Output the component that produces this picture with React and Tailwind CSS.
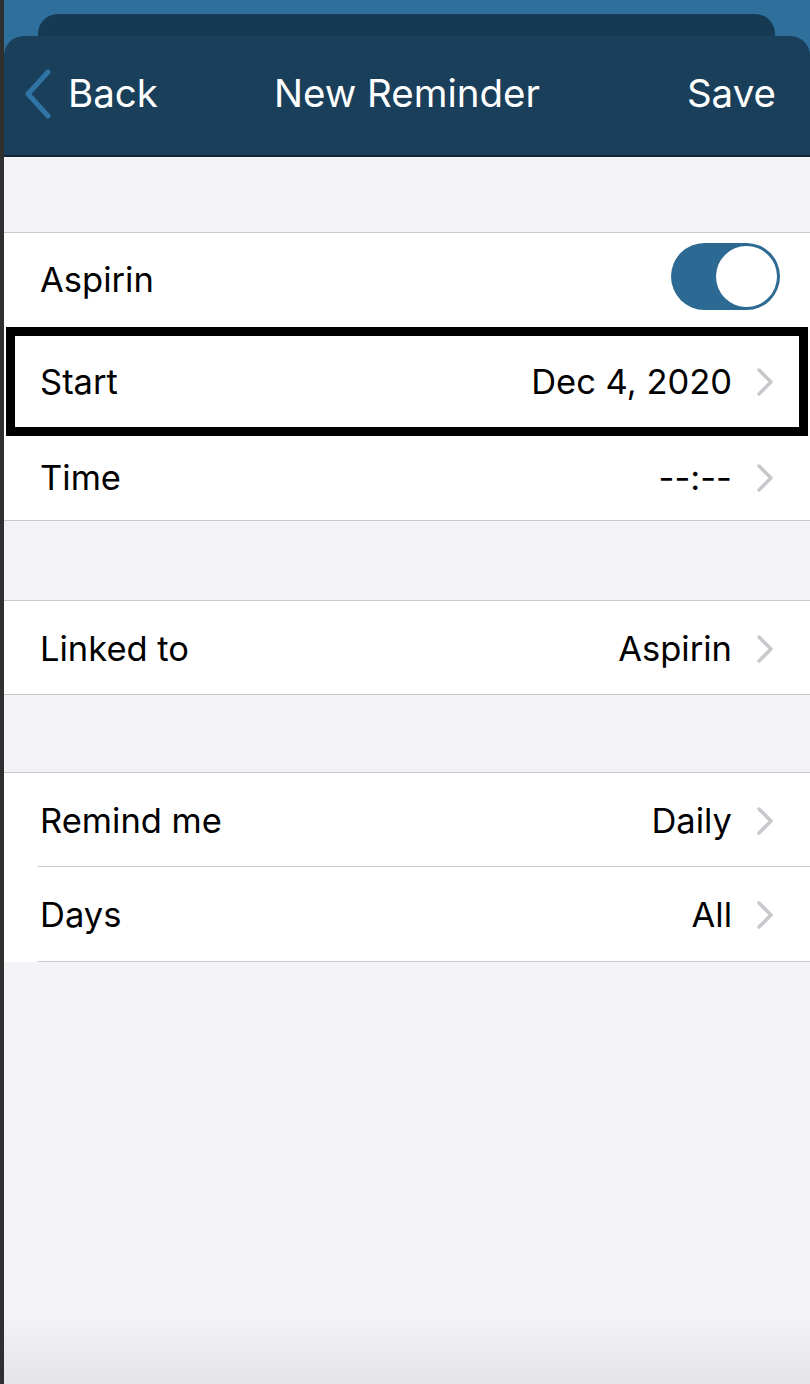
import React from 'react'

const font = { fontFamily: 'Inter, "Liberation Sans", sans-serif' }

function Chevron () {
  return (
    <svg width="18" height="30" viewBox="0 0 18 30" className="shrink-0">
      <polyline points="3,3 15,15 3,27" fill="none" stroke="#c7c7cc"
        strokeWidth="3.5" strokeLinecap="round" strokeLinejoin="round" />
    </svg>
  )
}

function BackChevron () {
  return (
    <svg width="28" height="50" viewBox="0 0 28 50" className="shrink-0">
      <polyline points="24,3 4,25 24,47" fill="none" stroke="#2f74a4"
        strokeWidth="5" strokeLinecap="round" strokeLinejoin="round" />
    </svg>
  )
}

function Row ({ label, value, height }) {
  return (
    <div className={`flex items-center bg-white pl-[36px] pr-[36px] ${height}`}>
      <span className="flex-1 text-[34.5px] text-black">{label}</span>
      {value && <span className="text-[34.5px] text-black mr-[24px]">{value}</span>}
      <Chevron />
    </div>
  )
}

function Toggle () {
  return (
    <div className="w-[109px] h-[67px] mb-[8px] rounded-full bg-[#2d6a93] flex items-center justify-end pr-[3px]">
      <div className="w-[61px] h-[61px] rounded-full bg-white" />
    </div>
  )
}

export default function App () {
  return (
    <div className="flex w-[810px] h-[1384px] bg-[#2f2f2f]" style={font}>
      <div className="w-[4px] shrink-0" />
      <div className="flex-1 flex flex-col">
        <div className="bg-[#2e6f9c] pt-[14px]">
          <div className="ml-[34px] mr-[35px] h-[22px] rounded-t-[20px] bg-[#163a52]" />
          <div className="h-[119px] rounded-t-[20px] bg-[#1a3f5b] flex items-center pl-[20px] pr-[16px] pb-[4px]">
            <div className="flex items-center gap-[16px] w-[200px]">
              <BackChevron />
              <span className="text-[38.5px] text-white">Back</span>
            </div>
            <span className="flex-1 text-center text-[38.5px] text-white pr-[4px]">New Reminder</span>
            <div className="w-[200px] text-right pr-[18px]">
              <span className="text-[38.5px] text-white">Save</span>
            </div>
          </div>
        </div>
        <div className="h-[2px] bg-[#10243a]" />

        <div className="flex-1 flex flex-col bg-[#f2f2f7]">
          <div className="h-[75px]" />
          <div className="border-t border-b border-[#c8c7cc]">
            <div className="flex items-center bg-white pl-[36px] pr-[30px] h-[94px]">
              <span className="flex-1 text-[34.5px] text-black">Aspirin</span>
              <Toggle />
            </div>
            <div className="bg-white px-[2px]">
              <div className="h-[109px] border-[9px] border-black flex items-center pl-[25px] pr-[25px]">
                <span className="flex-1 text-[34.5px] text-black">Start</span>
                <span className="text-[34.5px] text-black mr-[24px]">Dec 4, 2020</span>
                <Chevron />
              </div>
            </div>
            <Row label="Time" value="--:--" height="h-[84px]" />
          </div>

          <div className="h-[79px]" />
          <div className="border-t border-b border-[#c8c7cc]">
            <Row label="Linked to" value="Aspirin" height="h-[93px] pt-[2px]" />
          </div>

          <div className="h-[77px]" />
          <div className="border-t border-[#c8c7cc]">
            <div className="bg-white">
              <Row label="Remind me" value="Daily" height="h-[93px] pt-[2px]" />
              <div className="ml-[34px] h-px bg-[#c8c7cc]" />
              <Row label="Days" value="All" height="h-[94px] pt-[2px]" />
              <div className="ml-[34px] h-px bg-[#c8c7cc]" />
            </div>
          </div>

          <div className="flex-1 flex flex-col justify-end">
            <div className="h-[70px] bg-linear-to-b from-[#f2f2f7] to-[#e3e3e8]" />
          </div>
        </div>
      </div>
    </div>
  )
}
